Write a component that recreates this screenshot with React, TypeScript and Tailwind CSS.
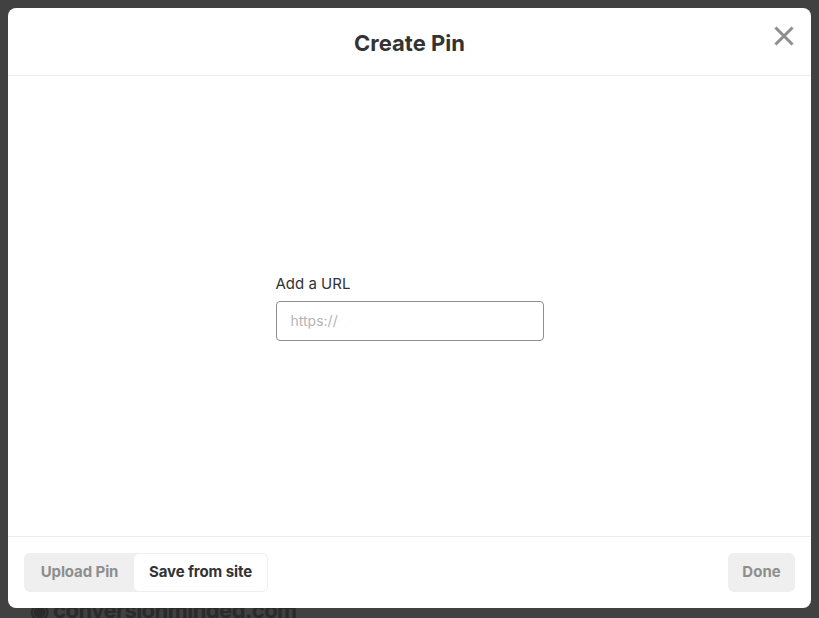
import React from "react";

export default function App() {
  return (
    <div
      className="relative w-[819px] h-[618px] overflow-hidden bg-[#414141]"
      style={{ fontFamily: "Inter, 'Liberation Sans', sans-serif" }}
    >
      <div className="absolute left-[30px] top-[596px] text-[22px] leading-[28px] font-bold text-[#2a2a2a] tracking-tight">
        ◉ conversionminded.com
      </div>
      <div className="absolute left-[8px] top-[8px] w-[803px] h-[600px] bg-white rounded-[8px] flex flex-col">
        <div className="relative h-[68px] shrink-0 border-b border-[#ececec] flex items-center justify-center pt-[3px]">
          <h1 className="text-[22px] font-bold text-[#333333]">Create Pin</h1>
          <button className="absolute right-[17px] top-[18px] w-[20px] h-[20px] flex items-center justify-center">
            <svg width="20" height="20" viewBox="0 0 20 20">
              <path d="M2.5 2.5 L17.5 17.5 M17.5 2.5 L2.5 17.5" stroke="#8e8e8e" strokeWidth="3" strokeLinecap="square" />
            </svg>
          </button>
        </div>
        <div className="flex-1 flex items-center justify-center">
          <div className="w-[268px] flex flex-col mt-[3px]">
            <label className="text-[15px] text-[#333333] mb-[8px] leading-[18px]">Add a URL</label>
            <div className="h-[40px] border border-[#8e8e8e] rounded-[4px] flex items-center px-[14px]">
              <span className="text-[14px] text-[#b5b5b5]">https://</span>
            </div>
          </div>
        </div>
        <div className="h-[72px] shrink-0 border-t border-[#ececec] flex items-center justify-between px-[16px]">
          <div className="flex h-[39px] bg-[#efefef] rounded-[6px] p-[1px]">
            <div className="w-[109px] flex items-center justify-center text-[15px] font-bold text-[#8e8e8e] tracking-[-0.1px]">Upload Pin</div>
            <div className="w-[133px] bg-white rounded-[5px] flex items-center justify-center text-[15px] font-bold text-[#333333] tracking-[-0.1px]">Save from site</div>
          </div>
          <div className="w-[67px] h-[39px] bg-[#efefef] rounded-[6px] flex items-center justify-center text-[15px] font-bold text-[#8e8e8e]">Done</div>
        </div>
      </div>
    </div>
  );
}
